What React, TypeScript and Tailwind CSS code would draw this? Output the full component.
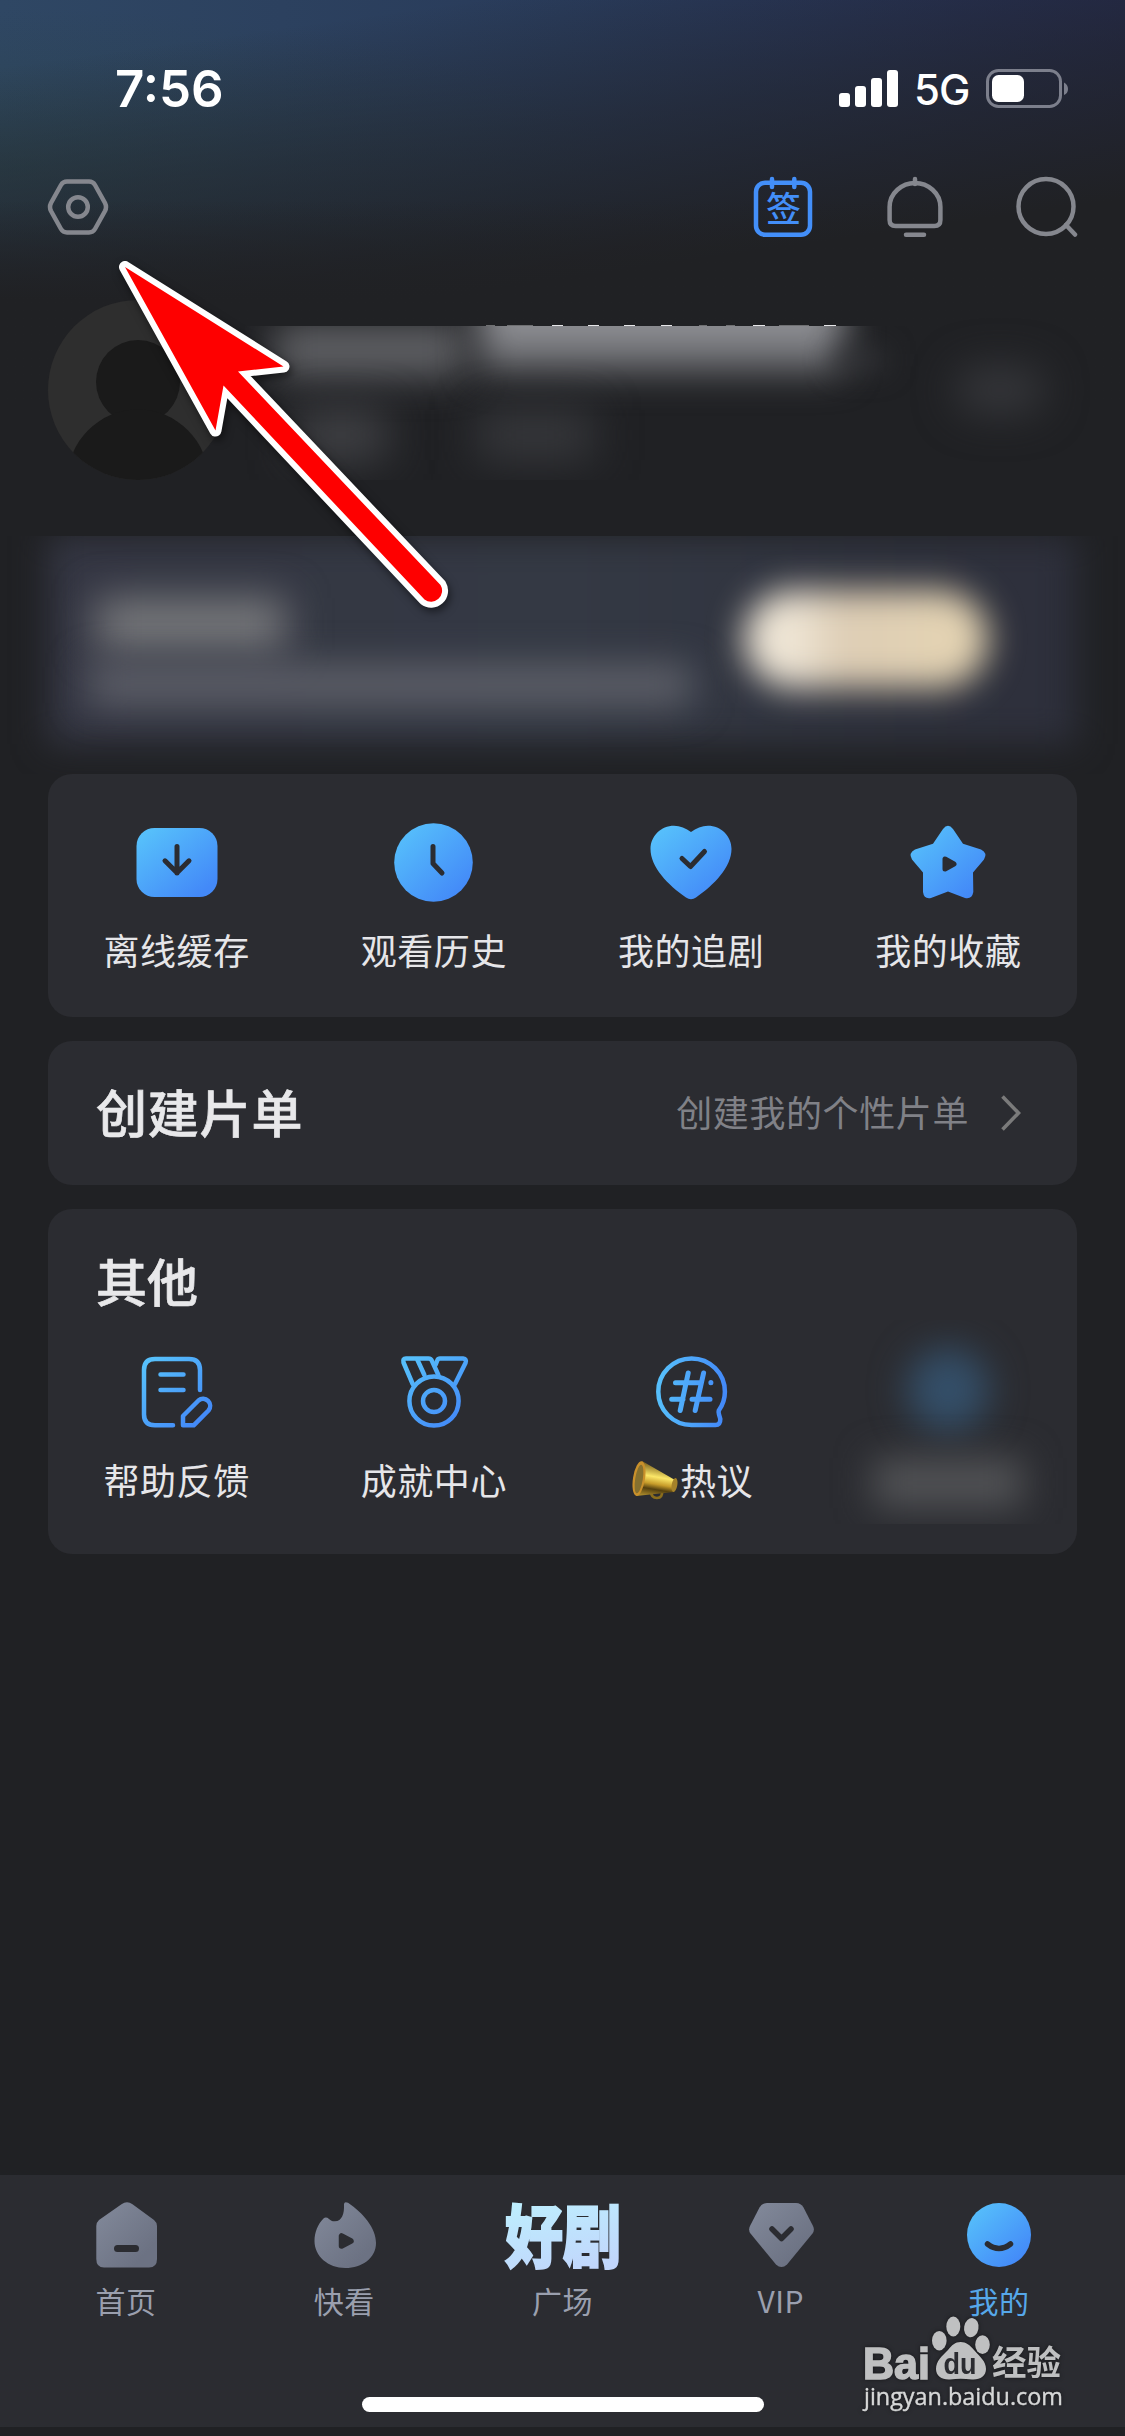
import type { ReactNode } from "react";

const CJK = "font-['Noto_Sans_CJK_SC',sans-serif]";

/* Shared gradients, referenced by id from every icon */
function Gradients() {
  return (
    <svg className="absolute w-0 h-0" aria-hidden>
      <defs>
        <linearGradient id="blue" x1="0.1" y1="0.1" x2="0.85" y2="0.9">
          <stop offset="0" stopColor="#56bffb" />
          <stop offset="1" stopColor="#4389f8" />
        </linearGradient>
        <linearGradient id="blueLine" gradientUnits="userSpaceOnUse" x1="14" y1="8" x2="66" y2="66">
          <stop offset="0" stopColor="#56bffb" />
          <stop offset="1" stopColor="#4389f8" />
        </linearGradient>
        <linearGradient id="blueAcross" gradientUnits="userSpaceOnUse" x1="10" y1="30" x2="76" y2="36">
          <stop offset="0" stopColor="#56bffb" />
          <stop offset="1" stopColor="#4389f8" />
        </linearGradient>
        <linearGradient id="gray" x1="0" y1="0" x2="0.8" y2="0.8">
          <stop offset="0" stopColor="#838a9b" />
          <stop offset="1" stopColor="#6c7283" />
        </linearGradient>
        <linearGradient id="gold" x1="0.3" y1="0" x2="0.1" y2="1">
          <stop offset="0" stopColor="#6b4f12" />
          <stop offset="0.4" stopColor="#fbe768" />
          <stop offset="0.6" stopColor="#c79c2a" />
          <stop offset="0.75" stopColor="#54400f" />
          <stop offset="1" stopColor="#b9962f" />
        </linearGradient>
      </defs>
    </svg>
  );
}

function StatusBar() {
  return (
    <div className="flex h-[178px] shrink-0 items-center justify-between pl-[115px] pr-[55px] font-['Inter',sans-serif] text-white">
      <span className="mt-[-2px] text-[51px] font-semibold leading-none">7:56</span>
      <div className="flex items-center">
        <svg width="59" height="38" viewBox="0 0 59 38" fill="#fff">
          <rect x="0" y="23" width="11" height="14" rx="3" />
          <rect x="16" y="16" width="11" height="21" rx="3" />
          <rect x="32" y="8" width="11" height="29" rx="3" />
          <rect x="48" y="0" width="11" height="37" rx="3" />
        </svg>
        <span className="ml-[16px] w-[54px] pt-[2px] text-[42px] font-medium leading-none tracking-[-1px]">5G</span>
        <svg className="ml-[18px]" width="84" height="40" viewBox="0 0 84 40">
          <rect x="1.500" y="1.500" width="73" height="36" rx="11" fill="none" stroke="#7c7f8c" strokeWidth="3" />
          <rect x="6" y="6" width="32" height="27" rx="6.500" fill="#fff" />
          <path d="M78 13.500Q82 15.500 82 20T78 26Z" fill="#7c7f8c" />
        </svg>
      </div>
    </div>
  );
}

function TopActions() {
  return (
    <div className="mt-[-2px] flex h-[62px] shrink-0 items-center justify-between pl-[47px] pr-[47px]">
      <svg width="62" height="62" viewBox="0 0 62 62" fill="none" stroke="#85878e" strokeWidth="4.500">
        <path d="M20 5.500H42Q46 5.500 48 9L58 27Q60 31 58 35L48 53Q46 56.500 42 56.500H20Q16 56.500 14 53L4 35Q2 31 4 27L14 9Q16 5.500 20 5.500Z" />
        <circle cx="31" cy="31" r="9.800" />
      </svg>
      <div className="flex gap-[70px]">
        <svg width="62" height="62" viewBox="0 0 62 62" fill="none" stroke="#438ff9" strokeWidth="4.500">
          <rect x="4" y="6.800" width="54" height="52" rx="9" />
          <path d="M20 3V11M42.300 3V11" strokeLinecap="round" />
          <text x="31.500" y="45.500" textAnchor="middle" fill="#438ff9" stroke="none" className={`${CJK} text-[35px] font-medium`}>
            签
          </text>
        </svg>
        <svg width="62" height="62" viewBox="0 0 62 62" fill="none" stroke="#85878e" strokeWidth="4.500">
          <path d="M31 7C44 7 56.400 17 56.400 31V44Q56.400 50 50.400 50H11.600Q5.600 50 5.600 44V31C5.600 17 18 7 31 7Z" />
          <path d="M31 3V8M22 58.800H40" strokeLinecap="round" />
        </svg>
        <svg width="62" height="62" viewBox="0 0 62 62" fill="none" stroke="#85878e" strokeWidth="4.500">
          <circle cx="30" cy="30.500" r="27.500" />
          <path d="M50 49L59 58.500" strokeLinecap="round" />
        </svg>
      </div>
    </div>
  );
}

function Profile() {
  return (
    <div className="mt-[62px] flex h-[180px] shrink-0 pl-[48px]">
      <svg width="180" height="180" viewBox="0 0 180 180">
        <clipPath id="avatar">
          <circle cx="90" cy="90" r="90" />
        </clipPath>
        <g clipPath="url(#avatar)">
          <rect width="180" height="180" fill="#2e2e2e" />
          <circle cx="90" cy="82" r="42" fill="#1a1a1a" />
          <circle cx="90" cy="180" r="70.500" fill="#1a1a1a" />
        </g>
      </svg>
      {/* masked user name and stats */}
      <div className="ml-[17px] w-[690px]">
        <svg className="block" width="690" height="26" viewBox="0 0 690 26">
          <g fill="#6f7072">
            <rect x="241" y="25" width="9" height="1" />
            <rect x="262" y="25" width="26" height="1" />
            <rect x="454" y="25" width="8" height="1" />
            <rect x="481" y="25" width="9" height="1" />
            <rect x="534" y="25" width="30" height="1" />
          </g>
          <g fill="#e6e6e8">
            <rect x="307" y="25" width="11" height="1" />
            <rect x="343" y="25" width="11" height="1" />
            <rect x="379" y="25" width="11" height="1" />
            <rect x="416" y="25" width="11" height="1" />
            <rect x="508" y="25" width="12" height="1" />
            <rect x="579" y="25" width="12" height="1" />
          </g>
        </svg>
        <div className="relative h-[154px] overflow-hidden">
          <div className="absolute left-[30px] top-[-2px] h-[52px] w-[190px] bg-[#616266] blur-[19px]" />
          <div className="absolute left-[234px] top-[-40px] h-[86px] w-[364px] bg-linear-to-b from-[#97989d] from-30% to-[#65666a] blur-[18px]" />
          <div className="absolute left-[590px] top-[24px] h-[20px] w-[50px] bg-[#333438] blur-[14px]" />
          <div className="absolute left-[50px] top-[84px] h-[50px] w-[92px] bg-[#414246] blur-[22px]" />
          <div className="absolute left-[232px] top-[84px] h-[50px] w-[116px] bg-[#37383c] blur-[22px]" />
        </div>
      </div>
      <div className="ml-[20px] mt-[66px] h-[48px] w-[90px] rounded-full bg-[#35363a] blur-[20px]" />
    </div>
  );
}

function VipBanner() {
  return (
    <div className="relative mt-[56px] h-[238px] shrink-0 overflow-hidden">
      <div className="absolute left-[48px] top-[0px] h-[208px] w-[1029px] bg-linear-to-r from-[#343643] via-[#343944] to-[#2d2f3b] blur-[17px]" />
      <div className="absolute left-[96px] top-[62px] h-[52px] w-[190px] bg-[#78797c] blur-[20px]" />
      <div className="absolute left-[88px] top-[130px] h-[38px] w-[604px] bg-[#61636c] blur-[19px]" />
      <div className="absolute left-[744px] top-[54px] h-[98px] w-[244px] rounded-full bg-linear-to-r from-[#efe6d6] from-20% via-[#ddcdb5] via-40% to-[#e6d5b2] blur-[17px]" />
    </div>
  );
}

function Entry({ icon, label, big = false }: { icon: ReactNode; label: ReactNode; big?: boolean }) {
  return (
    <div className={`flex flex-col items-center ${big ? "gap-[27px]" : "gap-[33px]"}`}>
      {icon}
      <span className="flex h-[36px] items-center text-[36px] leading-[36px] tracking-[0.6px] whitespace-nowrap text-[#e6e6e9]">
        {label}
      </span>
    </div>
  );
}

const SHORTCUTS = [
  {
    label: "离线缓存",
    art: (
      <>
        <rect x="1.500" y="6" width="81" height="69" rx="18" fill="url(#blue)" />
        <path d="M42 24.500V51M30 38.800L42 50.800L54 38.800" />
      </>
    ),
  },
  {
    label: "观看历史",
    art: (
      <>
        <circle cx="41.500" cy="40.500" r="39.300" fill="url(#blue)" />
        <path d="M41 24.500V41.500L50 51" />
      </>
    ),
  },
  {
    label: "我的追剧",
    art: (
      <>
        <path
          d="M42 10C37 6 31 3.700 25 3.700C12 3.700 1.500 14 1.500 27C1.500 45 19 63 37 75.500Q42 79 47 75.500C65 63 82.500 45 82.500 27C82.500 14 72 3.700 59 3.700C53 3.700 47 6 42 10Z"
          fill="url(#blue)"
          stroke="none"
        />
        <path d="M33 36.500L41.500 44.500L55.500 29.500" />
      </>
    ),
  },
  {
    label: "我的收藏",
    art: (
      <>
        <path
          d="M37 7Q42 0.500 47 7L57 21.700L75 27.500Q82 31 78 37.500L67 50.500L67.300 70Q66 77.500 59 76L42 69.500L25 76Q18 77.500 17 70L17 50.500L6 37.500Q2 31 9 27.500L27 21.700Z"
          fill="url(#blue)"
          stroke="none"
        />
        <path d="M39 37V47L48 42Z" fill="#2b2c31" strokeLinejoin="round" strokeWidth="5" />
      </>
    ),
  },
];

function Shortcuts() {
  return (
    <section className="grid h-[243px] shrink-0 grid-cols-4 rounded-[24px] bg-[#2b2c31] pt-[48px]">
      {SHORTCUTS.map((item) => (
        <Entry
          key={item.label}
          big
          label={item.label}
          icon={
            <svg width="84" height="82" viewBox="0 0 84 82" fill="none">
              <g stroke="#2b2c31" strokeWidth="5" strokeLinecap="round" strokeLinejoin="round" className="[&>rect]:stroke-none [&>circle]:stroke-none">
                {item.art}
              </g>
            </svg>
          }
        />
      ))}
    </section>
  );
}

function CreateList() {
  return (
    <section className="flex h-[144px] shrink-0 items-center justify-between rounded-[24px] bg-[#2b2c31] pl-[48px] pr-[56px]">
      <h2 className="mt-[-4px] text-[51px] font-medium leading-none tracking-[0.8px] text-[#e8e8ea] [-webkit-text-stroke:0.7px_#e8e8ea]">
        创建片单
      </h2>
      <div className="flex items-center gap-[32px]">
        <span className="mt-[-4px] text-[36px] leading-none tracking-[0.6px] text-[#808187]">创建我的个性片单</span>
        <svg width="20" height="36" viewBox="0 0 20 36" fill="none" stroke="#7b7b7b" strokeWidth="3.600">
          <path d="M1.500 1.500L17.500 18L1.500 34.500" />
        </svg>
      </div>
    </section>
  );
}

function Megaphone() {
  return (
    <svg className="ml-[2px] mr-[2px] mt-[2px]" width="47" height="40" viewBox="0 0 47 40">
      <path d="M20 31Q20 38 26 38T31 30" fill="none" stroke="#8a6d1c" strokeWidth="2.600" />
      <path d="M11 1L44 20Q47 25 43 32L5 36Z" fill="url(#gold)" />
      <ellipse cx="43.500" cy="25" rx="2.800" ry="7" fill="#a5822a" transform="rotate(10 43.500 25)" />
      <ellipse cx="8" cy="18.500" rx="6" ry="17.500" fill="#c9902b" transform="rotate(9 8 18.500)" />
      <ellipse cx="8" cy="19" rx="3.800" ry="14.500" fill="#85702f" transform="rotate(9 8 19)" />
    </svg>
  );
}

const OTHERS = [
  {
    key: "help",
    label: "帮助反馈",
    stroke: "url(#blueLine)",
    art: (
      <>
        <path d="M65 34V14Q65 3 54 3H20Q9 3 9 14V58.500Q9 69.300 20 69.300H38" />
        <path d="M25.500 18.500H48.500M25.500 34H48.500" />
        <path d="M48 60L63.500 44.500A7.100 7.100 0 0 1 73.500 54.500L58.700 69.300H48Z" />
      </>
    ),
  },
  {
    key: "medal",
    label: "成就中心",
    stroke: "url(#blueLine)",
    art: (
      <>
        <circle cx="42" cy="45" r="24.600" />
        <circle cx="42" cy="45" r="11" />
        <path d="M20.700 28L11.500 6.500Q10.500 2.500 14 2.500H36.500Q39 2.500 40 5L46.400 19" />
        <path d="M25.500 4L32.400 19M43.500 9L45.500 4Q46.200 2.500 48 2.500H71Q75 3 73.500 7L63 28" />
      </>
    ),
  },
  {
    key: "topic",
    label: (
      <>
        <Megaphone />
        热议
      </>
    ),
    stroke: "url(#blueAcross)",
    art: (
      <>
        <path d="M42.600 69A33.300 33.300 0 1 1 75.900 35.700Q75.900 46 69.800 54.500Q69.300 56 70 58.500L71.300 63Q71.500 69 66.500 69Z" />
        <path d="M39.200 17L31.200 54.500M54.600 17L46.200 54.500M26.500 26.700H51.500M22.700 43.300H34M43 43.300H61M61.900 26.600V26.800" strokeWidth="5" />
      </>
    ),
  },
];

function Others() {
  return (
    <section className="h-[345px] shrink-0 rounded-[24px] bg-[#2b2c31] pt-[46px]">
      <h2 className="pl-[48px] text-[51px] font-medium leading-[50px] text-[#e8e8ea] [-webkit-text-stroke:0.7px_#e8e8ea]">其他</h2>
      <div className="mt-[15px] grid h-[204px] grid-cols-4 overflow-hidden pt-[36px]">
        {OTHERS.map((item) => (
          <Entry
            key={item.key}
            label={item.label}
            icon={
              <svg width="84" height="72" viewBox="0 0 84 72" fill="none" stroke={item.stroke} strokeWidth="4.500" strokeLinecap="round" strokeLinejoin="round">
                {item.art}
              </svg>
            }
          />
        ))}
        {/* hidden entry */}
        <div className="flex flex-col items-center">
          <div className="mt-[-8px] h-[84px] w-[82px] rounded-full bg-[#344f69] blur-[18px]" />
          <div className="mt-[26px] h-[50px] w-[150px] bg-[#515255] blur-[18px]" />
        </div>
      </div>
    </section>
  );
}

const TABS = [
  {
    label: "首页",
    icon: (
      <>
        <path d="M28.500 2.200Q34 -1.800 39.500 2.200L61 18Q64 20.500 64 24V57Q64 65.500 56 65.500H11Q3.300 65.500 3.300 57V24Q3.300 20.500 6 18Z" fill="url(#gray)" />
        <rect x="21" y="43" width="25" height="7" rx="3.500" fill="#2b2c31" />
      </>
    ),
  },
  {
    label: "快看",
    icon: (
      <>
        <path d="M37 .8C52 11 65 26 65 41C65 56 51 66 34.500 66C17 66 3.500 54 3.500 39C3.500 30 7 22 12.500 16.500Q15 14.500 18 17C20 18.800 21.500 19.500 24 19.300C31 19 33.500 12 33 2Q33.500 -1 37 .8Z" fill="url(#gray)" />
        <path d="M30.500 34V44L40 39Z" fill="#2b2c31" stroke="#2b2c31" strokeWidth="5.500" strokeLinejoin="round" />
      </>
    ),
  },
  { label: "广场", icon: null },
  {
    label: "VIP",
    icon: (
      <>
        <path d="M19 1H48Q53 1 55.500 5.500L65 24Q67 28 64.500 31.500L39 62.500Q33.500 67.500 28 62.500L2.500 31.500Q0 28 2 24L11.500 5.500Q14 1 19 1Z" fill="url(#gray)" />
        <path d="M24 27L33.500 36.500L43 27" fill="none" stroke="#2b2c31" strokeWidth="5.500" strokeLinecap="round" strokeLinejoin="round" />
      </>
    ),
  },
  {
    label: "我的",
    active: true,
    icon: (
      <>
        <circle cx="33" cy="33" r="32" fill="url(#blue)" />
        <path d="M21.500 42Q33 51 44.500 42" fill="none" stroke="#2b2c31" strokeWidth="5.500" strokeLinecap="round" />
      </>
    ),
  },
];

function TabBar() {
  return (
    <nav className="mt-auto mb-[9px] flex h-[252px] shrink-0 flex-col items-center bg-[#2b2c31] pt-[27px]">
      <div className="grid w-[1091px] grid-cols-5">
        {TABS.map((tab) => (
          <div key={tab.label} className="flex flex-col items-center">
            {tab.icon ? (
              <svg width="66" height="66" viewBox="0 0 66 66" className="overflow-visible">
                {tab.icon}
              </svg>
            ) : (
              <svg width="118" height="66" viewBox="0 0 118 66" className="overflow-visible">
                <linearGradient id="ice" x1="0" y1="0" x2="0.3" y2="1">
                  <stop offset="0.2" stopColor="#bdeffe" />
                  <stop offset="1" stopColor="#c1d6fc" />
                </linearGradient>
                <text x="2" y="50.500" fill="url(#ice)" stroke="url(#ice)" strokeWidth="1.600" transform="scale(1 1.180)" className="text-[58px] font-black">
                  好剧
                </text>
              </svg>
            )}
            <span
              className={`mt-[17px] h-[32px] text-[30px] leading-[30px] tracking-[0.5px] ${
                tab.active ? "text-[#56a8ea]" : "text-[#9a9fae]"
              }`}
            >
              {tab.label}
            </span>
          </div>
        ))}
      </div>
      <div className="mt-[80px] h-[15px] w-[402px] rounded-full bg-white" />
    </nav>
  );
}

function Watermark() {
  return (
    <svg className="absolute left-[852px] top-[2314px] drop-shadow-[0_0_2px_rgba(0,0,0,0.5)]" width="230" height="110" viewBox="-10 0 230 110" fill="#bfc0c1">
      <text x="1" y="64.500" textLength="67" lengthAdjust="spacingAndGlyphs" stroke="#bfc0c1" strokeWidth="1.600" className="font-['Liberation_Sans',sans-serif] text-[45px] font-bold">
        Bai
      </text>
      <ellipse cx="77.300" cy="26.700" rx="7.300" ry="9.700" />
      <ellipse cx="91.300" cy="12.500" rx="7" ry="10" />
      <ellipse cx="109.300" cy="13.700" rx="7.200" ry="9.700" transform="rotate(10 109.300 13.700)" />
      <ellipse cx="120.500" cy="30.700" rx="7.300" ry="9.400" />
      <path d="M98.700 28C104 28 108 31 112 36C118 43 124 47 124 55C124 62 118 66 110 65.500C102 64.500 95 64.500 88 65.500C80 66 74 62 74 55C74 47 80 42 86 36C90 31 93 28 98.700 28Z" />
      <text x="81.500" y="60" textLength="33" lengthAdjust="spacingAndGlyphs" fill="#2b2c31" className="font-['Liberation_Sans',sans-serif] text-[29px] font-bold">
        du
      </text>
      <text x="130" y="61" className={`${CJK} text-[34.500px] font-bold`}>
        经验
      </text>
      <text x="2" y="90.500" fill="#d6d7d7" stroke="#d6d7d7" strokeWidth="0.400" textLength="199" lengthAdjust="spacingAndGlyphs" className="font-['Open_Sans',sans-serif] text-[23.500px]">
        jingyan.baidu.com
      </text>
    </svg>
  );
}

function PointerArrow() {
  return (
    <svg className="absolute left-[100px] top-[240px] drop-shadow-[2px_4px_4px_rgba(0,0,0,0.5)]" width="370" height="390" viewBox="100 240 370 390">
      <path
        d="M125 267L283.500 366.500L238 371.500L440.500 585A11 11 0 0 1 424.500 599.500L223.500 385.500L215.500 430.500Z"
        fill="#fe0000"
        stroke="#fff"
        strokeWidth="12"
        strokeLinejoin="round"
        paintOrder="stroke"
      />
    </svg>
  );
}

export default function App() {
  return (
    <div className={`relative flex h-[2436px] w-[1125px] flex-col overflow-hidden bg-[#202124] ${CJK}`}>
      <Gradients />
      {/* header glow */}
      <div className="absolute inset-x-0 top-0 h-[400px] bg-[linear-gradient(172deg,#20212400_12%,#20212480_36%,#202124_64%),radial-gradient(55%_40%_at_0%_42%,#2a424490,#2a424400),linear-gradient(90deg,#2f4764,#293b5a_50%,#252c50)]" />
      <div className="absolute inset-x-0 top-[200px] h-[200px] bg-linear-to-b from-[#20212400] to-[#202124] to-50%" />
      <div className="relative flex flex-1 flex-col">
        <StatusBar />
        <TopActions />
        <Profile />
        <VipBanner />
        <main className="flex flex-col gap-[24px] px-[48px]">
          <Shortcuts />
          <CreateList />
          <Others />
        </main>
        <TabBar />
      </div>
      <Watermark />
      <PointerArrow />
    </div>
  );
}
